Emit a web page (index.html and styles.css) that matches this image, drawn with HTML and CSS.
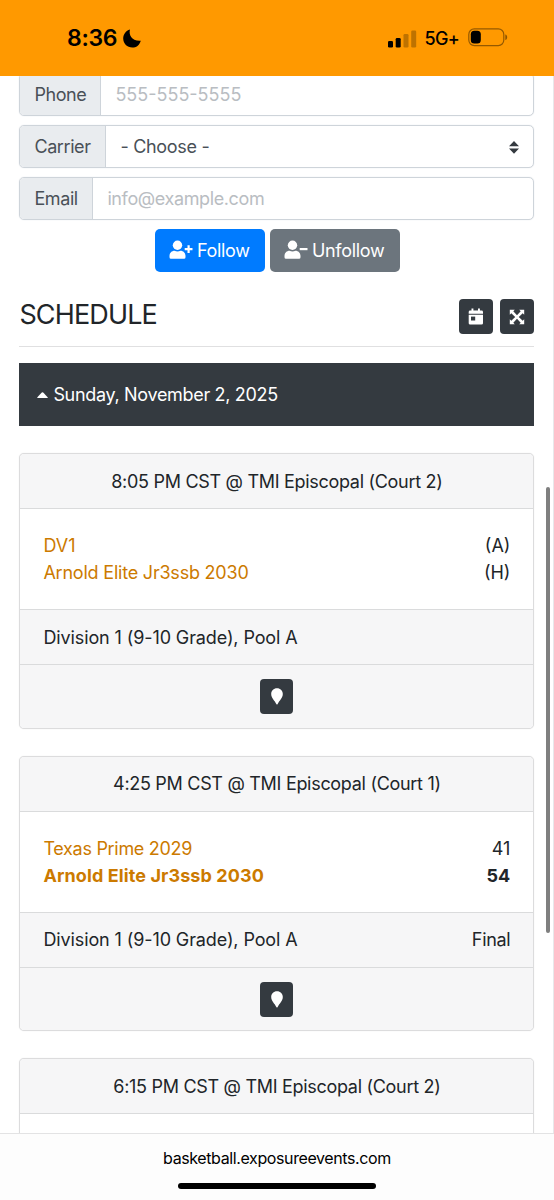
FILE: index.html
```html
<!DOCTYPE html>
<html lang="en">
<head>
<meta charset="utf-8">
<title>Schedule</title>
<link rel="stylesheet" href="styles.css">
</head>
<body>
<div class="phone">
  <header class="status">
    <div class="clock"><span class="time">8:36</span>
      <svg class="moon" width="18" height="19" viewBox="0 0 18 19"><path d="M7 .4C5.500 5.500 8.500 12.300 17.800 11.700C16.400 16.200 13.200 18.600 9.300 18.600C4.200 18.600.2 14.700.2 9.600C.2 5.200 2.800 1.700 7 .4Z"/></svg>
    </div>
    <div class="signals">
      <svg class="bars" width="29" height="18" viewBox="0 0 29 18"><rect x="0" y="11" width="5" height="6.500" rx="1.300"/><rect x="7.700" y="8" width="5" height="9.500" rx="1.300"/><g opacity=".25"><rect x="15.500" y="4" width="5" height="13.500" rx="1.300"/><rect x="23.200" y=".5" width="5" height="17" rx="1.300"/></g></svg>
      <span class="network">5G+</span>
      <svg class="battery" width="40" height="19" viewBox="0 0 40 19"><g fill="none" stroke="#000" stroke-opacity=".42" stroke-width="1.200"><rect x=".8" y=".9" width="35" height="16.700" rx="5.500"/></g><rect x="2.800" y="2.800" width="10" height="12.800" rx="3.500"/><path d="M37.300 6.500C39.800 7 39.800 11.500 37.300 12Z" opacity=".45"/></svg>
    </div>
  </header>

  <main class="page">
    <form class="follow-form">
      <div class="group"><label class="label label-phone">Phone</label><div class="field placeholder">555-555-5555</div></div>
      <div class="group"><label class="label label-carrier">Carrier</label><div class="field select"><span>- Choose -</span>
        <svg width="10" height="13" viewBox="0 0 10 13"><path d="M0 5.200L5 0L10 5.200ZM0 7.600L5 12.800L10 7.600Z" fill="#343a40"/></svg></div></div>
      <div class="group"><label class="label label-email">Email</label><div class="field placeholder t-email">info@example.com</div></div>
      <div class="actions">
        <div class="btn btn-follow">
          <svg width="24" height="20" viewBox="0 0 24 20" fill="#fff"><circle cx="8.500" cy="5.300" r="4.700"/><path d="M.5 18.700V16C.5 12.800 2.800 10.700 5.500 10.700Q8.500 12.200 11.500 10.700C14.200 10.700 16.500 12.800 16.500 16V17.200Q16.500 18.700 15 18.700H2Q.5 18.700.5 17.200Z"/><path d="M19.600 5.200V13M15.700 9.100H23.500" stroke="#fff" stroke-width="2.200"/></svg>
          <span>Follow</span></div>
        <div class="btn btn-unfollow">
          <svg width="24" height="20" viewBox="0 0 24 20" fill="#fff"><circle cx="8.500" cy="5.300" r="4.700"/><path d="M.5 18.700V16C.5 12.800 2.800 10.700 5.500 10.700Q8.500 12.200 11.500 10.700C14.200 10.700 16.500 12.800 16.500 16V17.200Q16.500 18.700 15 18.700H2Q.5 18.700.5 17.200Z"/><path d="M15.700 9.100H23.500" stroke="#fff" stroke-width="2.200"/></svg>
          <span>Unfollow</span></div>
      </div>
    </form>

    <div class="heading">
      <h2>SCHEDULE</h2>
      <div class="tools">
        <div class="tool"><svg width="16" height="18" viewBox="0 0 16 18"><path d="M.7 5.700V4Q.7 2.600 2.100 2.600H3.500V.5H5.400V2.600H10V.5H11.900V2.600H13.500Q15 2.600 15 4V5.700ZM.7 6.800H15V15.200Q15 16.600 13.500 16.600H2.100Q.7 16.600.7 15.200Z" fill="#fff"/><rect x="3" y="8.600" width="4.200" height="3.900" fill="#343a40"/></svg></div>
        <div class="tool"><svg width="16" height="16" viewBox="0 0 16 16"><path d="M.8.800H5.800L4.300 2.300L8 6.200L11.700 2.300L10.200.8H15.200V5.800L13.700 4.300L9.800 8L13.700 11.700L15.200 10.200V15.200H10.200L11.700 13.700L8 9.800L4.300 13.700L5.800 15.200H.8V10.200L2.300 11.700L6.200 8L2.300 4.300L.8 5.800Z" fill="#fff"/></svg></div>
      </div>
    </div>

    <div class="day"><svg width="11" height="6" viewBox="0 0 11 6"><path d="M1 6Q-.3 6 .6 5L4.800.6Q5.500 0 6.200.6L10.400 5Q11.300 6 10 6Z" fill="#fff"/></svg><span>Sunday, November 2, 2025</span></div>

    <section class="card">
      <div class="card-head"><span>8:05 PM CST @ TMI Episcopal (Court 2)</span></div>
      <div class="card-body">
        <div class="row"><a class="t-dv">DV1</a><span>(A)</span></div>
        <div class="row"><a class="t-arnold">Arnold Elite Jr3ssb 2030</a><span>(H)</span></div>
      </div>
      <div class="card-info"><span class="t-div">Division 1 (9-10 Grade), Pool A</span></div>
      <div class="card-foot"><div class="pin"><svg width="12" height="17" viewBox="0 0 12 17"><path d="M6 .3C9.400.300 11.800 2.800 11.800 6C11.800 9.800 8.300 12.600 6.500 16.200Q6 17 5.500 16.200C3.700 12.600.2 9.800.2 6C.2 2.800 2.600.3 6 .3Z" fill="#fff"/></svg></div></div>
    </section>

    <section class="card">
      <div class="card-head"><span>4:25 PM CST @ TMI Episcopal (Court 1)</span></div>
      <div class="card-body">
        <div class="row"><a class="t-texas">Texas Prime 2029</a><span>41</span></div>
        <div class="row winner"><a>Arnold Elite Jr3ssb 2030</a><span>54</span></div>
      </div>
      <div class="card-info"><span class="t-div">Division 1 (9-10 Grade), Pool A</span><span class="t-final">Final</span></div>
      <div class="card-foot"><div class="pin"><svg width="12" height="17" viewBox="0 0 12 17"><path d="M6 .3C9.400.300 11.800 2.800 11.800 6C11.800 9.800 8.300 12.600 6.500 16.200Q6 17 5.500 16.200C3.700 12.600.2 9.800.2 6C.2 2.800 2.600.3 6 .3Z" fill="#fff"/></svg></div></div>
    </section>

    <section class="card">
      <div class="card-head"><span>6:15 PM CST @ TMI Episcopal (Court 2)</span></div>
      <div class="card-body"></div>
    </section>
    <div class="scrollbar"></div>
  </main>

  <footer class="browser-bar">
    <span class="address">basketball.exposureevents.com</span>
    <div class="home-indicator"></div>
  </footer>
</div>
</body>
</html>
```
FILE: styles.css
```css
* { box-sizing: border-box; }
body { margin: 0; background: #fff; font-family: Inter, "Liberation Sans", sans-serif; font-size: 18px; line-height: 27px; color: #212529; }
svg { display: block; flex: none; }
span, a, label { white-space: nowrap; }
.phone { display: flex; flex-direction: column; width: 554px; height: 1200px; overflow: hidden; }
.status { flex: none; height: 76px; background: #ff9900; color: #000; display: flex; justify-content: space-between; padding: 0 46px 0 67px; }
.clock, .signals { display: flex; align-items: center; height: 76px; }
.time { font-size: 23px; font-weight: 600; letter-spacing: -0.3px; }
.moon { margin-left: 6px; }
.bars { margin-top: 1px; }
.network { font-size: 18px; font-weight: 500; letter-spacing: -0.7px; margin: 1px 9px 0 8px; }
.battery { margin-top: -2px; }

.page { position: relative; flex: 1; min-height: 0; overflow: hidden; padding: 0 18.600px 0 19.400px; border-right: 1px solid #e8e8ea; }
.follow-form { margin-top: -3px; display: flex; flex-direction: column; gap: 9px; }
.group { display: flex; height: 43px; border: 1px solid #ced4da; border-radius: 5px; overflow: hidden; box-shadow: 0 0 1px #ced4da; }
.label { flex: none; background: #e9ecef; color: #495057; border-right: 1px solid #ced4da; padding: 7px 0 0 14px; letter-spacing: -0.4px; }
.label-phone { width: 81px; }
.label-carrier { width: 86px; }
.label-email { width: 73px; }
.field { flex: 1; padding: 7px 14px; color: #495057; }
.placeholder { color: #b9bdc2; }
.t-email { letter-spacing: -0.38px; }
.select { display: flex; justify-content: space-between; align-items: flex-start; letter-spacing: -0.3px; }
.select svg { margin-top: 8px; }
.actions { display: flex; justify-content: center; gap: 5px; padding-left: 1px; }
.btn { height: 43px; border-radius: 5px; color: #fff; display: flex; padding: 8px 0 0 14px; gap: 4px; letter-spacing: -0.3px; }
.btn svg { margin-top: 3px; }
.btn-follow { width: 110px; background: #007bff; }
.btn-unfollow { width: 130px; background: #6c757d; }

.heading { display: flex; justify-content: space-between; height: 75px; padding-top: 27px; border-bottom: 1px solid #e0e0e1; }
h2 { margin: 1px 0 0; font-size: 27px; line-height: 30px; font-weight: 400; letter-spacing: -0.850px; }
.tools { display: flex; gap: 7px; }
.tool { width: 34px; height: 35px; border-radius: 4px; background: #343a40; display: flex; align-items: center; justify-content: center; }
.day { height: 63px; margin-top: 16px; background: #343a40; color: #fff; display: flex; align-items: center; padding-left: 18px; gap: 5px; letter-spacing: -0.320px; }

.card { margin-top: 27px; height: 275.500px; border: 1px solid #dcdcdd; border-radius: 5px; overflow: hidden; background: #fff; box-shadow: 0 0 1px #dcdcdd; }
.card-head { height: 55px; background: #f6f6f7; border-bottom: 1px solid #dadbdc; display: flex; align-items: center; justify-content: center; letter-spacing: -0.3px; }
.card-body { height: 100px; padding: 23px; }
.row { display: flex; justify-content: space-between; }
.row a { color: #cc7a00; }
.t-arnold { letter-spacing: -0.210px; }
.t-texas { letter-spacing: -0.3px; }
.t-div { letter-spacing: -0.110px; }
.t-final { letter-spacing: -0.3px; }
.winner { font-weight: 700; letter-spacing: 0.1px; }
.card-info { height: 56px; padding: 0 23px; background: #f6f6f7; border-top: 1px solid #dadbdc; border-bottom: 1px solid #dadbdc; display: flex; align-items: center; justify-content: space-between; }
.card-foot { height: 63px; background: #f6f6f7; display: flex; align-items: center; justify-content: center; }
.pin { width: 33px; height: 35px; border-radius: 4px; background: #343a40; display: flex; align-items: center; justify-content: center; }
.scrollbar { position: absolute; right: 3px; top: 411px; width: 4px; height: 446px; border-radius: 2px; background: #7f7f7f; }

.browser-bar { flex: none; height: 67px; border-top: 1px solid #e3e3e4; background: #fdfdfd; color: #000; display: flex; flex-direction: column; align-items: center; }
.address { font-size: 16px; line-height: 20px; margin-top: 14px; letter-spacing: -0.390px; }
.home-indicator { width: 198px; height: 6px; border-radius: 3px; background: #000; margin-top: 15px; }
```
